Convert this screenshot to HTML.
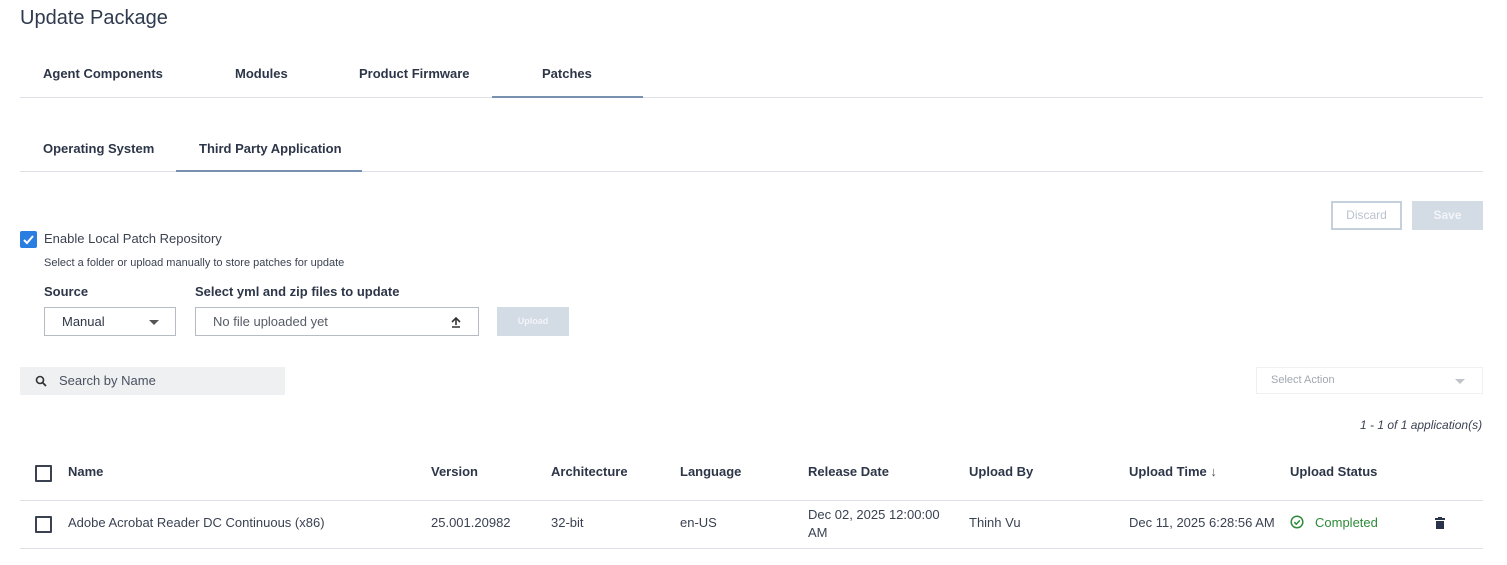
<!DOCTYPE html>
<html><head><meta charset="utf-8"><style>
*{margin:0;padding:0;box-sizing:border-box}
body{width:1507px;height:565px;background:#fff;font-family:"Liberation Sans",sans-serif;color:#2d3648;position:relative;overflow:hidden;font-size:13px}
.a{position:absolute;white-space:nowrap}
.b{font-weight:bold;font-size:13px;color:#2d3648}
.line{position:absolute;height:1px;background:#dde1e6}
.cb{position:absolute;width:17px;height:17px;border:2px solid #3a4252;border-radius:1px}
</style></head><body>
<div class="a" style="left:20px;top:7px;font-size:20px;color:#2f3a4f">Update Package</div>
<div class="a b" style="left:43px;top:66px">Agent Components</div>
<div class="a b" style="left:235px;top:66px">Modules</div>
<div class="a b" style="left:359px;top:66px">Product Firmware</div>
<div class="a b" style="left:542px;top:66px">Patches</div>
<div class="line" style="left:20px;top:97px;width:1463px"></div>
<div class="a" style="left:492px;top:96px;width:151px;height:2px;background:#7891b0"></div>
<div class="a b" style="left:43px;top:141px">Operating System</div>
<div class="a b" style="left:199px;top:141px">Third Party Application</div>
<div class="line" style="left:20px;top:171px;width:1463px"></div>
<div class="a" style="left:176px;top:170px;width:186px;height:2px;background:#7891b0"></div>

<div class="a" style="left:1331px;top:201px;width:71px;height:29px;border:2px solid #c5d0dd;color:#b9c3cf;font-size:12px;text-align:center;line-height:25px">Discard</div>
<div class="a" style="left:1412px;top:201px;width:71px;height:29px;background:#d3dbe5;color:#f3f5f8;font-size:12px;font-weight:bold;text-align:center;line-height:29px">Save</div>

<div class="a" style="left:20px;top:231px;width:17px;height:17px;background:#2a7de1;border-radius:2px"><svg width="17" height="17"><path d="M4 9l3 3 6-7" stroke="#fff" stroke-width="2" fill="none"/></svg></div>
<div class="a" style="left:44px;top:231px;font-size:13px;color:#3a4252">Enable Local Patch Repository</div>
<div class="a" style="left:44px;top:257px;font-size:11px;color:#3a4252">Select a folder or upload manually to store patches for update</div>
<div class="a b" style="left:44px;top:284px">Source</div>
<div class="a b" style="left:195px;top:284px">Select yml and zip files to update</div>
<div class="a" style="left:44px;top:307px;width:132px;height:29px;border:1px solid #b7bcc4"><span class="a" style="left:17px;top:6px;font-size:13px">Manual</span><span class="a" style="left:104px;top:12px;border-left:5px solid transparent;border-right:5px solid transparent;border-top:5px solid #555"></span></div>
<div class="a" style="left:195px;top:307px;width:284px;height:29px;border:1px solid #b7bcc4"><span class="a" style="left:17px;top:6px;font-size:13px;color:#555b66">No file uploaded yet</span><svg class="a" style="left:255px;top:9px" width="10" height="11"><path d="M1 5l4-4 4 4M5 1v7M1 10h8" stroke="#333" stroke-width="1.6" fill="none"/></svg></div>
<div class="a" style="left:497px;top:307px;width:72px;height:29px;background:#d3dbe5;color:#f3f5f8;font-size:9px;font-weight:bold;text-align:center;line-height:29px">Upload</div>

<div class="a" style="left:20px;top:367px;width:265px;height:28px;background:#eef0f2"><svg class="a" style="left:15px;top:8px" width="13" height="13"><circle cx="5" cy="5" r="3.5" stroke="#333" stroke-width="1.6" fill="none"/><path d="M7.5 7.5l3.5 3.5" stroke="#333" stroke-width="1.8"/></svg><span class="a" style="left:39px;top:6px;font-size:13px;color:#4a5160">Search by Name</span></div>
<div class="a" style="left:1256px;top:367px;width:227px;height:27px;border:1px solid #eef0f2"><span class="a" style="left:14px;top:6px;font-size:11px;color:#a2a8b1">Select Action</span><span class="a" style="left:198px;top:11px;border-left:5px solid transparent;border-right:5px solid transparent;border-top:5px solid #c0c4ca"></span></div>
<div class="a" style="left:1360px;top:418px;font-size:12px;font-style:italic;color:#3a4252">1 - 1 of 1 application(s)</div>

<div class="cb" style="left:35px;top:465px"></div>
<div class="a b" style="left:68px;top:464px">Name</div>
<div class="a b" style="left:431px;top:464px">Version</div>
<div class="a b" style="left:551px;top:464px">Architecture</div>
<div class="a b" style="left:680px;top:464px">Language</div>
<div class="a b" style="left:808px;top:464px">Release Date</div>
<div class="a b" style="left:969px;top:464px">Upload By</div>
<div class="a b" style="left:1129px;top:464px">Upload Time <span style="font-weight:normal;color:#555">&#8595;</span></div>
<div class="a b" style="left:1290px;top:464px">Upload Status</div>
<div class="line" style="left:20px;top:500px;width:1463px"></div>
<div class="cb" style="left:35px;top:516px"></div>
<div class="a" style="left:68px;top:515px;color:#3a4252">Adobe Acrobat Reader DC Continuous (x86)</div>
<div class="a" style="left:431px;top:515px;color:#3a4252">25.001.20982</div>
<div class="a" style="left:551px;top:515px;color:#3a4252">32-bit</div>
<div class="a" style="left:680px;top:515px;color:#3a4252">en-US</div>
<div class="a" style="left:808px;top:506px;color:#3a4252;line-height:18px">Dec 02, 2025 12:00:00<br>AM</div>
<div class="a" style="left:969px;top:515px;color:#3a4252">Thinh Vu</div>
<div class="a" style="left:1129px;top:515px;color:#3a4252">Dec 11, 2025 6:28:56 AM</div>
<svg class="a" style="left:1290px;top:515px" width="14" height="14"><circle cx="7" cy="7" r="5.8" stroke="#2e8b3a" stroke-width="1.5" fill="none"/><path d="M4.3 7.2l2 2 3.5-3.8" stroke="#2e8b3a" stroke-width="1.5" fill="none"/></svg>
<div class="a" style="left:1315px;top:515px;color:#2e8b3a">Completed</div>
<svg class="a" style="left:1435px;top:517px" width="10" height="12"><rect x="0" y="1" width="10" height="2" fill="#283248"/><rect x="3" y="0" width="4" height="2" fill="#283248"/><rect x="1" y="4" width="8" height="8" fill="#283248"/></svg>
<div class="line" style="left:20px;top:548px;width:1463px"></div>
</body></html>
